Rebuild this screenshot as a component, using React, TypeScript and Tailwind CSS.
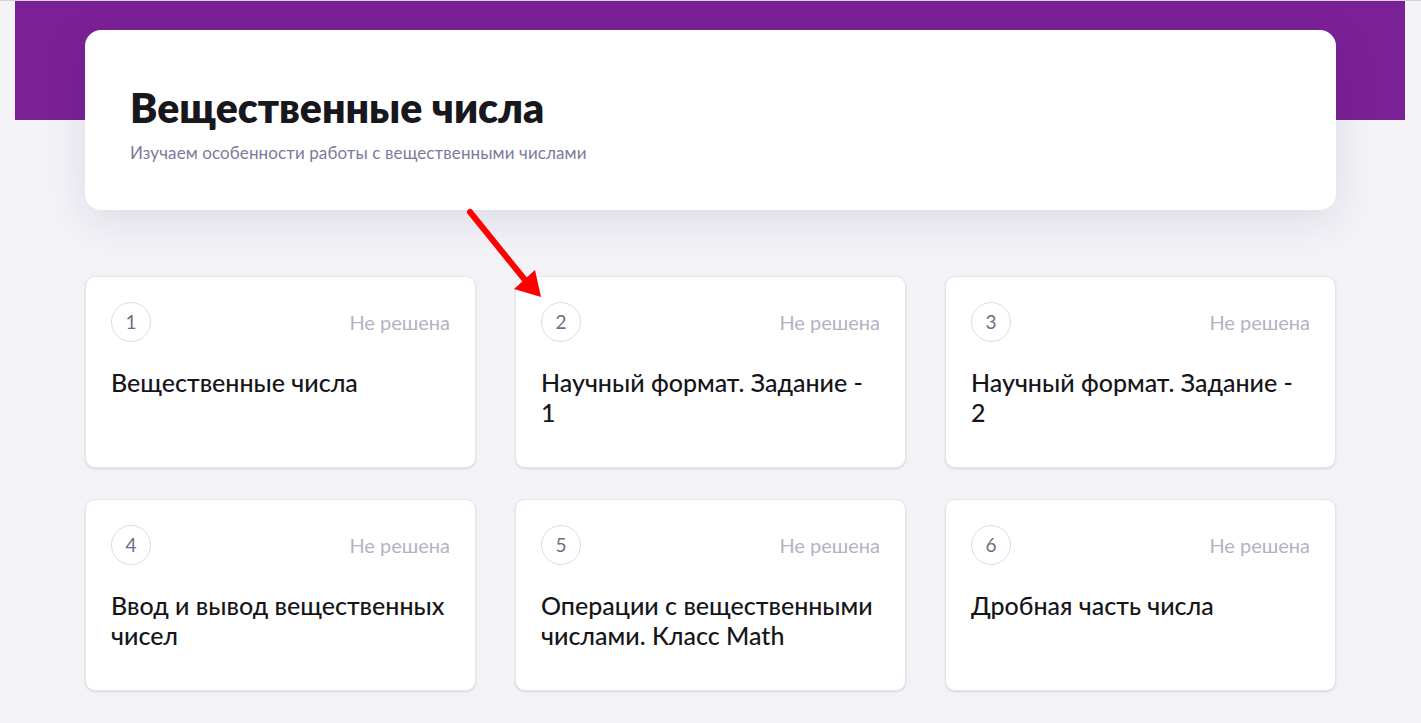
import React from 'react';

const tasks = [
  { id: 1, title: 'Вещественные числа' },
  { id: 2, title: 'Научный формат. Задание - 1' },
  { id: 3, title: 'Научный формат. Задание - 2' },
  { id: 4, title: 'Ввод и вывод вещественных чисел' },
  { id: 5, title: 'Операции с вещественными числами. Класс Math' },
  { id: 6, title: 'Дробная часть числа' },
];

const App = () => {
  return (
    <div className="relative min-h-screen bg-[#f2f2f7] border-t border-[#d4d4d8] font-['Lato','Noto_Sans',sans-serif]">
      {/* Purple band */}
      <div className="h-[119px] ml-[15px] mr-[16px] bg-[#7b2196]" />

      <div className="mx-[85px] -mt-[90px]">
        {/* Header card */}
        <div className="h-[180px] bg-white rounded-[16px] shadow-[0_10px_40px_rgba(30,30,70,0.10)] px-[45px] pt-[54px]">
          <h1 className="text-[41px] leading-[48px] font-extrabold text-[#17171c]">Вещественные числа</h1>
          <p className="mt-[11px] text-[17px] leading-[20px] tracking-[0.1px] text-[#7b7b9b]">
            Изучаем особенности работы с вещественными числами
          </p>
        </div>

        {/* Task grid */}
        <div className="mt-[66px] grid grid-cols-3 gap-x-[39px] gap-y-[31px]">
          {tasks.map((t) => (
            <div
              key={t.id}
              className="h-[192px] bg-white rounded-[10px] border border-[#e4e4ea] shadow-[0_1px_2px_rgba(0,0,0,0.12)] px-[25px] pt-[25px]"
            >
              <div className="flex items-center justify-between">
                <div className="w-[40px] h-[40px] rounded-full border border-[#dcdce4] flex items-center justify-center text-[19px] text-[#6e6e84]">
                  {t.id}
                </div>
                <span className="text-[20px] text-[#b3b3c4]">Не решена</span>
              </div>
              <div className="mt-[25px] text-[25px] leading-[30px] text-[#16161a] font-medium">{t.title}</div>
            </div>
          ))}
        </div>
      </div>

      {/* Red arrow annotation */}
      <svg className="absolute left-0 top-0 pointer-events-none" width="1421" height="723">
        <line x1="470" y1="211" x2="525" y2="279" stroke="#ff0000" strokeWidth="6" strokeLinecap="round" />
        <polygon points="541,296 514,288 535,269" fill="#ff0000" />
      </svg>
    </div>
  );
};

export default App;
